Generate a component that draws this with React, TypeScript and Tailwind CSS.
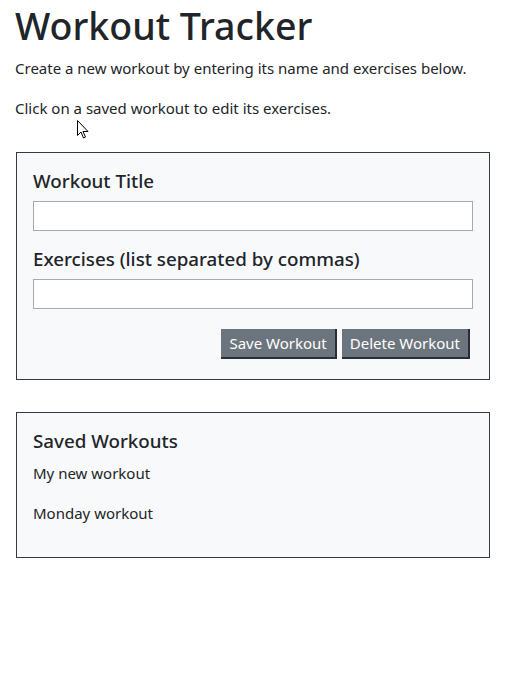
export default function App() {
  return (
    <div className="relative min-h-[685px] bg-white px-[15px] text-[#212529] font-['Noto_Sans',sans-serif]">
      <h1 className="pt-[3px] text-[37.5px] font-medium leading-[45px]">Workout Tracker</h1>
      <p className="mt-2 text-[15px] leading-6">Create a new workout by entering its name and exercises below.</p>
      <p className="mt-4 text-[15px] leading-6">Click on a saved workout to edit its exercises.</p>

      <div className="mx-px mt-8 border border-[#343a40] bg-[#f8f9fa] px-4 pt-4 pb-5">
        <label className="block text-[18.75px] font-medium leading-6">Workout Title</label>
        <input className="mt-2 block h-[30px] w-full border border-[#aaaaaa] bg-white" />
        <label className="mt-4 block text-[18.75px] font-medium leading-6">Exercises (list separated by commas)</label>
        <input className="mt-2 block h-[30px] w-full border border-[#aaaaaa] bg-white" />
        <div className="mt-5 flex justify-end gap-[5px] pr-[3px]">
          <button className="h-[30px] border-r-2 border-b-2 border-[#2b2f33] bg-[#6c757d] px-2 text-[15px] text-white">Save Workout</button>
          <button className="h-[30px] border-r-2 border-b-2 border-[#2b2f33] bg-[#6c757d] px-2 text-[15px] text-white">Delete Workout</button>
        </div>
      </div>

      <div className="mx-px mt-8 border border-[#343a40] bg-[#f8f9fa] px-4 pt-4 pb-8">
        <h2 className="text-[18.75px] font-medium leading-6">Saved Workouts</h2>
        <p className="mt-2 text-[15px] leading-6">My new workout</p>
        <p className="mt-4 text-[15px] leading-6">Monday workout</p>
      </div>

      <svg className="absolute left-[77px] top-[120px]" width="12" height="19" viewBox="0 0 12 19">
        <path d="M0.5 0.5 L0.5 15.5 L4 12 L6.5 18 L8.5 17 L6 11.5 L11 11.5 Z" fill="white" stroke="black" strokeWidth="1" strokeLinejoin="round" />
      </svg>
    </div>
  );
}
